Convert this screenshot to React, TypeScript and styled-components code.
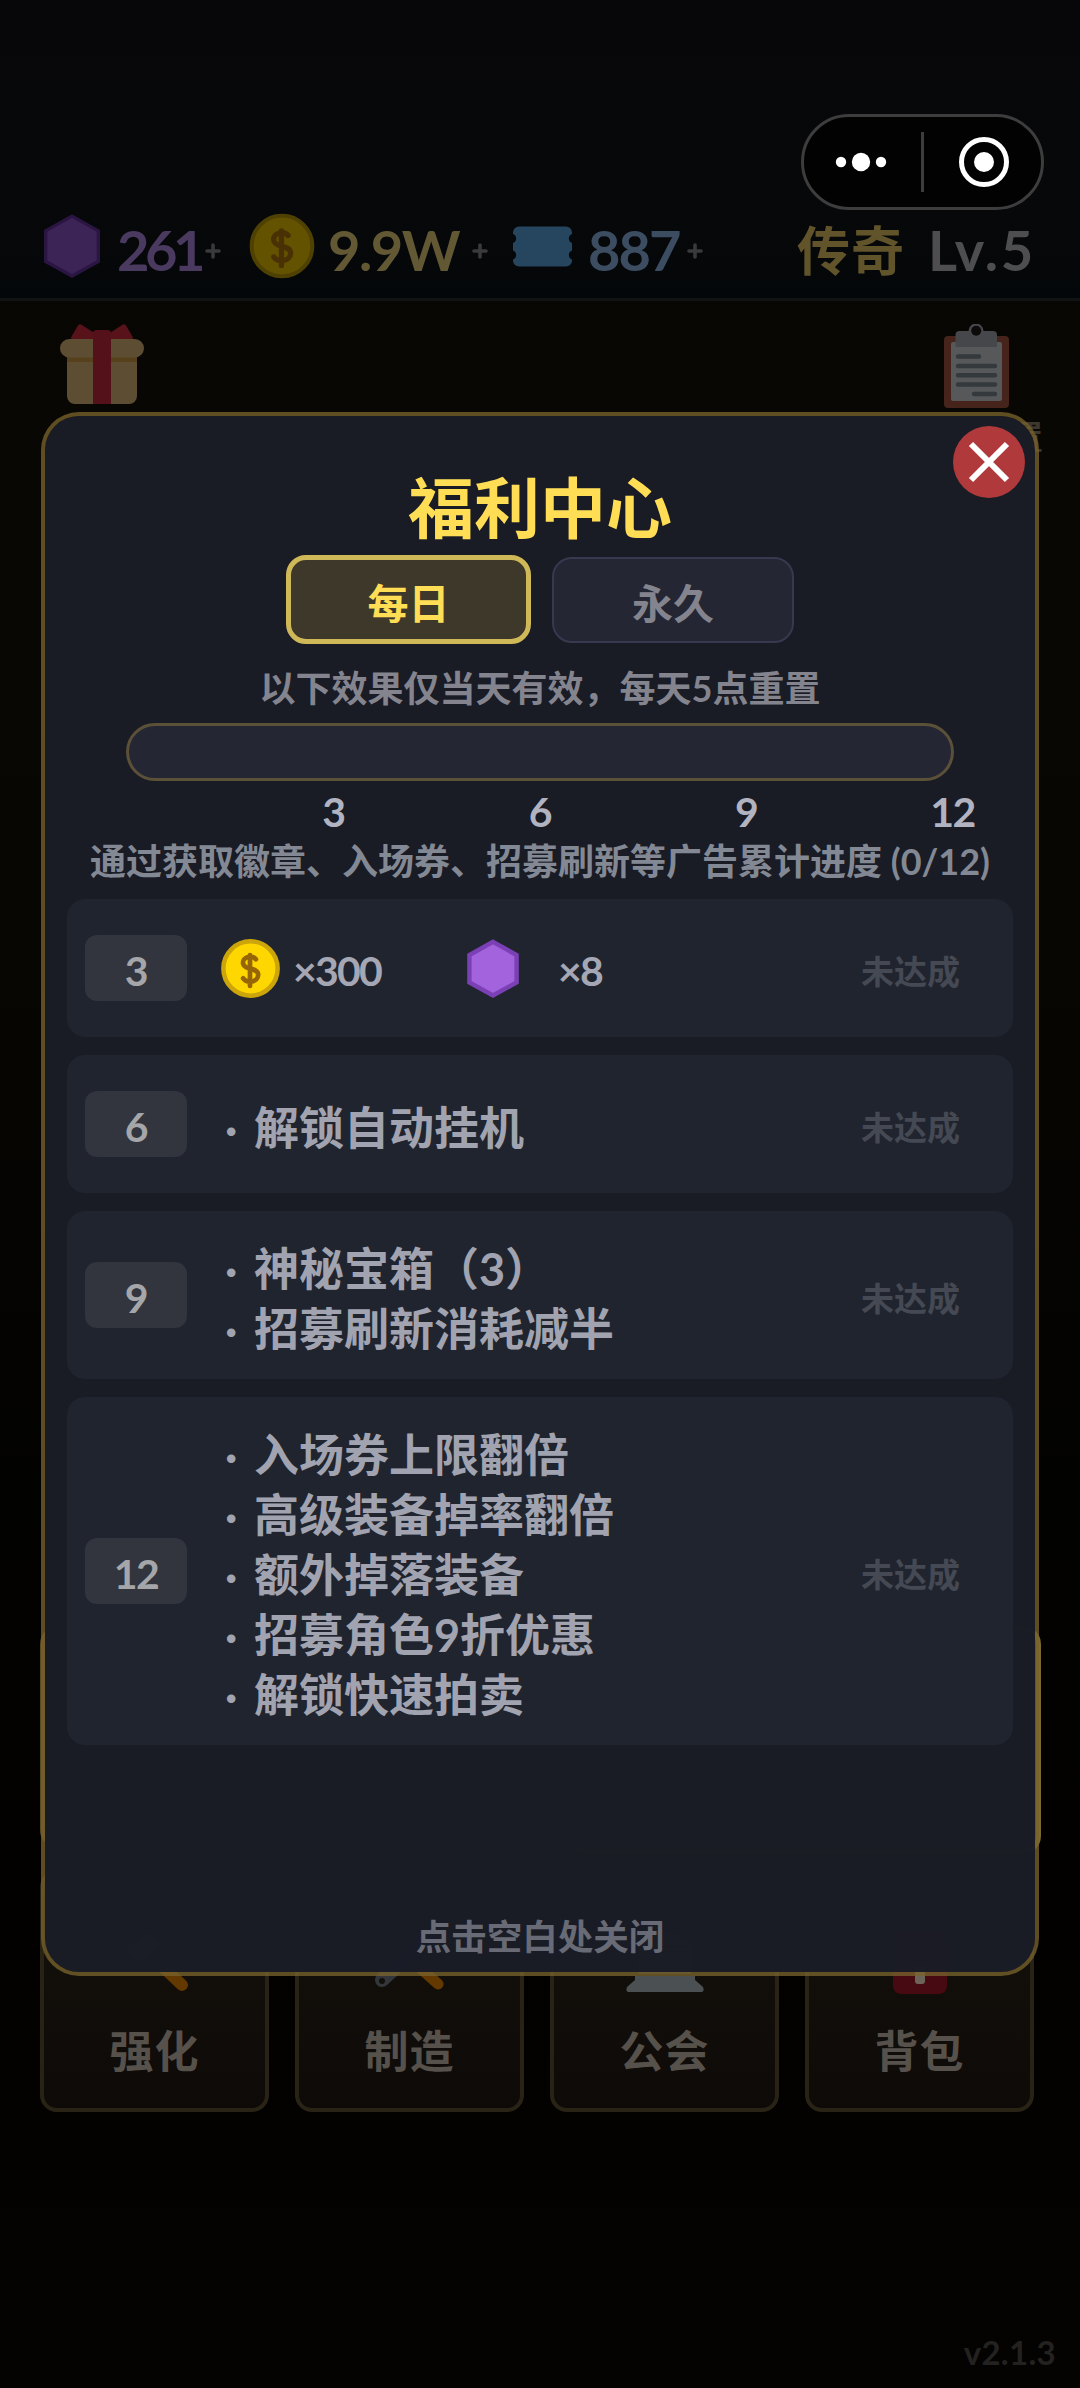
import React from "react";
import styled, { createGlobalStyle } from "styled-components";

const GlobalStyle = createGlobalStyle`
  *, *::before, *::after { box-sizing: border-box; }
  html, body { margin: 0; padding: 0; background: #040301; }
  body {
    font-family: Lato, "Noto Sans CJK SC", "Noto Sans", sans-serif;
    font-weight: 700;
    line-height: 1;
    white-space: nowrap;
  }
  svg { display: block; flex: none; }
`;

/* ---------- page behind the dialog ---------- */

const Screen = styled.div`
  position: relative;
  display: flex;
  flex-direction: column;
  width: 1080px;
  height: 2388px;
  overflow: hidden;
  background: linear-gradient(180deg, #060503 0, #090704 420px, #080602 900px, #020201 1500px, #020100 1900px, #040302 2388px);
`;

const TopBar = styled.header`
  display: flex;
  align-items: flex-start;
  height: 301px;
  padding: 213px 44px 0 43px;
  border-bottom: 3px solid #111315;
  background: linear-gradient(180deg, #07070a 0, #07080a 200px, #040709 298px);
`;

const Currency = styled.div<{ $w: number; $gap: number }>`
  display: flex;
  align-items: center;
  width: ${(p) => p.$w}px;
  height: 66px;
  gap: ${(p) => p.$gap}px;
`;

const Amount = styled.span<{ $color: string; $w: number; $ls: number }>`
  width: ${(p) => p.$w}px;
  padding-top: 7px;
  font-size: 56px;
  line-height: 66px;
  letter-spacing: ${(p) => p.$ls}px;
  color: ${(p) => p.$color};
`;

const PlusSvg = styled.svg`
  margin-top: 10px;
`;

const PlusIcon = () => (
  <PlusSvg width="16" height="16" viewBox="0 0 16 16">
    <path d="M8 2v12M2 8h12" stroke="#3a3a3b" strokeWidth="3.6" strokeLinecap="round" />
  </PlusSvg>
);

const Rank = styled.div`
  display: flex;
  align-items: center;
  height: 66px;
  margin-left: auto;
  padding-top: 9px;
`;

const Tier = styled.span`
  width: 131px;
  font-size: 53px;
  letter-spacing: 1px;
  color: #62542a;
`;

const Level = styled.span`
  width: 108px;
  padding-bottom: 2px;
  font-size: 56px;
  letter-spacing: 2.5px;
  color: #4e4e51;
`;

const SideRow = styled.div`
  display: flex;
  justify-content: space-between;
  align-items: flex-start;
  height: 1325px;
  padding: 23px 37px 0 60px;
`;

const SideEntry = styled.div`
  display: flex;
  flex-direction: column;
  align-items: center;
`;

const SideLabel = styled.span`
  margin-top: 11px;
  font-size: 33px;
  line-height: 34px;
  color: #3d372d;
`;

const PartyRow = styled.div`
  display: grid;
  grid-template-columns: 238px 238px 473px;
  gap: 26px;
  height: 230px;
  padding: 0 0 0 40px;
  width: 1041px;
`;

const PartyCard = styled.div<{ $accent?: boolean }>`
  display: flex;
  align-items: center;
  justify-content: center;
  height: ${(p) => (p.$accent ? 228 : 222)}px;
  padding-top: 100px;
  border: 5px solid ${(p) => (p.$accent ? "#7c692f" : "#2b2416")};
  border-left-color: #5a4a22;
  border-radius: 18px;
  background: ${(p) => (p.$accent ? "#241f14" : "#08080a")};
  font-size: 42px;
  color: #050506;
`;

const Menu = styled.nav`
  display: grid;
  grid-template-columns: repeat(4, 229px);
  gap: 26px;
  margin-top: 14px;
  padding-left: 40px;
`;

const MenuCard = styled.div`
  display: flex;
  flex-direction: column;
  align-items: center;
  justify-content: space-between;
  height: 242px;
  padding: 54px 0 32px;
  border: 4px solid #292316;
  border-radius: 17px;
  background: linear-gradient(180deg, #15120c, #0e0a08);
`;

const MenuLabel = styled.span`
  font-size: 44px;
  line-height: 50px;
  letter-spacing: 1px;
  color: #57514c;
`;

const Version = styled.footer`
  margin-top: auto;
  padding: 0 24px 18px 0;
  text-align: right;
  font-size: 33px;
  line-height: 36px;
  letter-spacing: 0.3px;
  color: #232220;
`;

/* ---------- mini-program capsule ---------- */

const Capsule = styled.div`
  position: absolute;
  top: 114px;
  left: 801px;
  display: flex;
  align-items: center;
  width: 243px;
  height: 96px;
  border: 3px solid #3d3d3e;
  border-radius: 48px;
  background: #020203;
`;

/* ---------- dialog ---------- */

const Dialog = styled.section`
  position: absolute;
  top: 412px;
  left: 41px;
  display: flex;
  flex-direction: column;
  align-items: center;
  width: 998px;
  height: 1564px;
  padding-top: 55px;
  border: 4.5px solid rgba(120, 99, 45, 0.78);
  border-radius: 38px;
  background: rgba(25, 27, 38, 0.985);
  background-clip: padding-box;
`;

const Close = styled.button`
  position: absolute;
  top: 10px;
  right: 10px;
  display: grid;
  place-items: center;
  width: 72px;
  height: 72px;
  padding: 0;
  border: 0;
  border-radius: 50%;
  background: #b03a3b;
`;

const Title = styled.h1`
  margin: 0;
  font-size: 66px;
  line-height: 74px;
  font-weight: 700;
  color: #ffdd55;
`;

const Tabs = styled.div`
  display: flex;
  align-items: center;
  gap: 21px;
  margin-top: 10px;
  height: 89px;
`;

const Tab = styled.button<{ $active?: boolean }>`
  width: ${(p) => (p.$active ? 245 : 242)}px;
  height: ${(p) => (p.$active ? 89 : 86)}px;
  padding: 7px 0 0;
  border: ${(p) => (p.$active ? "5px solid #cfb857" : "2px solid #38384f")};
  border-radius: 20px;
  background: ${(p) => (p.$active ? "#3e382a" : "#242633")};
  font: inherit;
  font-size: 41px;
  line-height: 1;
  color: ${(p) => (p.$active ? "#ffdd55" : "#83848e")};
`;

const Hint = styled.p<{ $top: number; $color: string }>`
  margin: ${(p) => p.$top}px 0 0;
  font-size: 36px;
  line-height: 44px;
  color: ${(p) => p.$color};
`;

const Track = styled.div`
  width: 828px;
  height: 58px;
  margin-top: 13px;
  border: 3px solid #5b5038;
  border-radius: 29px;
  background: #252634;
`;

const Ticks = styled.div`
  display: grid;
  grid-template-columns: repeat(4, 206.4px);
  width: 826px;
  height: 44px;
  margin-top: 8px;
`;

const Tick = styled.span`
  justify-self: end;
  width: 80px;
  margin-right: -40px;
  text-align: center;
  font-size: 41px;
  line-height: 46px;
  letter-spacing: -1.5px;
  color: #b1b3c0;
`;

const Rows = styled.div`
  display: flex;
  flex-direction: column;
  gap: 18px;
  margin-top: 16px;
`;

const Row = styled.div`
  display: grid;
  grid-template-columns: 102px 1fr 98px;
  align-items: center;
  width: 946px;
  min-height: 138px;
  padding: 24px 54px 24px 18px;
  border-radius: 18px;
  background: #20242e;
`;

const Badge = styled.div`
  height: 66px;
  border-radius: 12px;
  background: #32353d;
  text-align: center;
  font-size: 41px;
  line-height: 72px;
  letter-spacing: -1.5px;
  color: #a5a6a9;
`;

const Effects = styled.ul`
  margin: 0;
  padding: 0 0 0 36px;
  list-style: none;
`;

const Effect = styled.li`
  display: flex;
  align-items: center;
  height: 60px;
  padding-top: 8px;
  font-size: 45px;
  line-height: 52px;
  color: #a1a4b0;
`;

const Dot = styled.span`
  width: 31px;
  padding-left: 2px;
`;

const Rewards = styled.div`
  display: flex;
  align-items: center;
  padding-left: 34px;
`;

const Reward = styled.div<{ $w: number; $gap: number }>`
  display: flex;
  align-items: center;
  width: ${(p) => p.$w}px;
  gap: ${(p) => p.$gap}px;
`;

const Qty = styled.span`
  padding-top: 5px;
  font-size: 41px;
  line-height: 46px;
  letter-spacing: -1.8px;
  color: #a5a8b4;
`;

const Status = styled.span`
  padding-top: 6px;
  font-size: 33px;
  line-height: 40px;
  color: #454953;
`;

const Dismiss = styled.p`
  margin: auto 0 13px;
  font-size: 35.5px;
  line-height: 44px;
  color: #686b76;
`;

/* ---------- drawings ---------- */

const Gem = ({ w, h, dim }: { w: number; h: number; dim?: boolean }) => (
  <svg width={w} height={h} viewBox="0 0 52 59" preserveAspectRatio="none">
    <path
      d="M26 2.8 49.6 16v27.4L26 56.4 2.4 43.4V16Z"
      fill={dim ? "#3d2456" : "#a263dc"}
      stroke={dim ? "#2b1542" : "#7b40b5"}
      strokeWidth={dim ? 3 : 4.4}
    />
  </svg>
);

const Coin = ({ size, dim }: { size: number; dim?: boolean }) => (
  <svg width={size} height={size} viewBox="0 0 60 60">
    <circle cx="30" cy="30" r="27.6" fill={dim ? "#635200" : "#ffd700"} stroke={dim ? "#4f4102" : "#cba50a"} strokeWidth={dim ? 3.6 : 4.6} />
    <path
      d="M35.5 20.5c-2-2.4-5.2-2.9-8-2.2-3.5.9-5.4 3.7-5.1 6.300.4 3.400 3.600 4.600 7.200 5.500 4.200 1 8 2 8.200 6.200.1 3.700-2.900 6.400-7 6.900-3 .3-6.400-.6-8.300-3.200M29.500 16.300v31.400"
      fill="none"
      stroke={dim ? "#4a3005" : "#966505"}
      strokeWidth="4.8"
      strokeLinecap="round"
    />
  </svg>
);

const Ticket = () => (
  <svg width="61" height="41" viewBox="0 0 61 41">
    <path
      d="M7 .5h47a6 6 0 0 1 6 6v1.500a4.800 4.800 0 0 0 0 9v7.500a4.800 4.800 0 0 0 0 9v1a6 6 0 0 1-6 6H7a6 6 0 0 1-6-6v-1a4.800 4.800 0 0 0 0-9V17a4.800 4.800 0 0 0 0-9V6.500a6 6 0 0 1 6-6Z"
      fill="#26455f"
    />
  </svg>
);

const Gift = () => (
  <svg width="84" height="81" viewBox="0 0 84 81">
    <path d="M18 1.500c1-1.500 2.500-1.500 4-.5l13 8.500h14l13-8.500c1.500-1 3-1 4 .5l6.500 11c1 2-.5 4-2.500 4H14c-2.500 0-3.500-2-2.500-4Z" fill="#581219" />
    <rect x="7" y="26" width="70" height="54" rx="8" fill="#5d4e33" />
    <path d="M7 33h70v5H7Z" fill="#57401c" />
    <rect x="0" y="15" width="84" height="18.500" rx="9.200" fill="#5d4e33" />
    <path d="M33 9q0-3 4-3h10q4 0 4 3v71H33Z" fill="#541119" />
  </svg>
);

const Clipboard = () => (
  <svg width="66" height="84" viewBox="0 0 66 84">
    <rect x="0" y="12" width="65" height="72" rx="4" fill="#46241c" />
    <rect x="7" y="18" width="51" height="59" rx="2" fill="#565859" />
    <path d="M11.500 11q0-4 4-4h9a7.500 7.500 0 0 1 15 0h9.500q4 0 4 4v12h-41.500Z" fill="#45474a" />
    <circle cx="32.200" cy="6.700" r="5" fill="#0c0b0a" />
    <path d="M14 32.500h21M14 42h37M14 51.200h37M14 60.500h37M30 70h21" stroke="#34393d" strokeWidth="4.400" strokeLinecap="round" />
  </svg>
);

const Hammer = () => (
  <svg width="76" height="64" viewBox="0 0 76 64">
    <path d="M28 22 65 57" stroke="#633900" strokeWidth="12" strokeLinecap="round" />
    <path d="M8 22 30 4l14 14-20 16Z" fill="#3a4047" />
  </svg>
);

const Tools = () => (
  <svg width="76" height="62" viewBox="0 0 76 62">
    <path d="m28 22 38 34" stroke="#633900" strokeWidth="11" strokeLinecap="round" />
    <path d="M56 10 10 52" stroke="#33373b" strokeWidth="14" strokeLinecap="round" />
    <circle cx="10" cy="53" r="3" fill="#12100b" />
  </svg>
);

const Hall = () => (
  <svg width="80" height="64" viewBox="0 0 80 64">
    <path d="M40 0 72 18H8ZM14 20h52v26H14Z" fill="#343a3e" />
    <path d="M10 48h60v4l8 7q2 5-2 5H4q-4 0-2-5l8-7Z" fill="#4b5153" />
  </svg>
);

const Bag = () => (
  <svg width="54" height="66" viewBox="0 0 54 66">
    <rect x="0" y="4" width="54" height="62" rx="8" fill="#470a12" />
    <rect x="22" y="38" width="10" height="18" rx="3" fill="#6d6459" />
  </svg>
);

/* ---------- data ---------- */

const goals: { n: number; effects?: string[] }[] = [
  { n: 3 },
  { n: 6, effects: ["解锁自动挂机"] },
  { n: 9, effects: ["神秘宝箱（3）", "招募刷新消耗减半"] },
  { n: 12, effects: ["入场券上限翻倍", "高级装备掉率翻倍", "额外掉落装备", "招募角色9折优惠", "解锁快速拍卖"] },
];

const menu = [
  { label: "强化", icon: <Hammer /> },
  { label: "制造", icon: <Tools /> },
  { label: "公会", icon: <Hall /> },
  { label: "背包", icon: <Bag /> },
];

export default function App() {
  return (
    <>
      <GlobalStyle />
      <Screen>
        <TopBar>
          <Currency $w={206} $gap={16}>
            <Gem w={58} h={66} dim />
            <Amount $color="#4b3a60" $w={72} $ls={-4.5}>261</Amount>
            <PlusIcon />
          </Currency>
          <Currency $w={263} $gap={13}>
            <Coin size={66} dim />
            <Amount $color="#625834" $w={131} $ls={-1.5}>9.9W</Amount>
            <PlusIcon />
          </Currency>
          <Currency $w={200} $gap={15}>
            <Ticket />
            <Amount $color="#3c4d62" $w={84} $ls={-2}>887</Amount>
            <PlusIcon />
          </Currency>
          <Rank>
            <Tier>传奇</Tier>
            <Level>Lv.5</Level>
          </Rank>
        </TopBar>

        <SideRow>
          <SideEntry>
            <Gift />
            <SideLabel>福利</SideLabel>
          </SideEntry>
          <SideEntry>
            <Clipboard />
            <SideLabel>战斗配置</SideLabel>
          </SideEntry>
        </SideRow>

        <PartyRow>
          <PartyCard>组队 20/20</PartyCard>
          <PartyCard>副本</PartyCard>
          <PartyCard $accent />
        </PartyRow>

        <Menu>
          {menu.map((m) => (
            <MenuCard key={m.label}>
              {m.icon}
              <MenuLabel>{m.label}</MenuLabel>
            </MenuCard>
          ))}
        </Menu>

        <Version>v2.1.3</Version>

        <Dialog>
          <Title>福利中心</Title>
          <Tabs>
            <Tab $active>每日</Tab>
            <Tab>永久</Tab>
          </Tabs>
          <Hint $top={22} $color="#83848e">以下效果仅当天有效，每天5点重置</Hint>
          <Track />
          <Ticks>
            {goals.map((g) => (
              <Tick key={g.n}>{g.n}</Tick>
            ))}
          </Ticks>
          <Hint $top={6} $color="#838994">通过获取徽章、入场券、招募刷新等广告累计进度 (0/12)</Hint>
          <Rows>
            {goals.map((g) => (
              <Row key={g.n}>
                <Badge>{g.n}</Badge>
                {g.effects ? (
                  <Effects>
                    {g.effects.map((e) => (
                      <Effect key={e}>
                        <Dot>·</Dot>
                        {e}
                      </Effect>
                    ))}
                  </Effects>
                ) : (
                  <Rewards>
                    <Reward $w={246} $gap={13}>
                      <Coin size={59} />
                      <Qty>×300</Qty>
                    </Reward>
                    <Reward $w={140} $gap={39}>
                      <Gem w={52} h={59} />
                      <Qty>×8</Qty>
                    </Reward>
                  </Rewards>
                )}
                <Status>未达成</Status>
              </Row>
            ))}
          </Rows>
          <Dismiss>点击空白处关闭</Dismiss>
          <Close aria-label="close">
            <svg width="42" height="42" viewBox="0 0 42 42">
              <path d="M3 3 39 39M39 3 3 39" stroke="#fff" strokeWidth="6" />
            </svg>
          </Close>
        </Dialog>

        <Capsule>
          <svg width="237" height="90" viewBox="0 0 237 90">
            <circle cx="37" cy="45" r="5.200" fill="#fff" />
            <circle cx="57" cy="45" r="9.200" fill="#fff" />
            <circle cx="77" cy="45" r="5.200" fill="#fff" />
            <path d="M118.500 15v60" stroke="#3d3d3e" strokeWidth="3" />
            <circle cx="180" cy="45" r="22.500" fill="none" stroke="#fff" strokeWidth="5" />
            <circle cx="180" cy="45" r="10" fill="#fff" />
          </svg>
        </Capsule>
      </Screen>
    </>
  );
}
